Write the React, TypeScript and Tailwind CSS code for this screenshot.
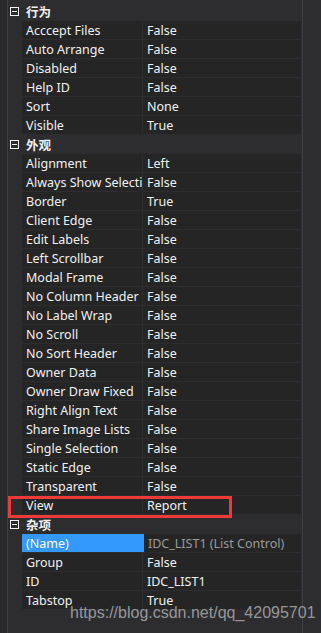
import React from "react";

type Prop = { name: string; value: string; selected?: boolean };
type Group = { title: string; items: Prop[] };

const groups: Group[] = [
  {
    title: "行为",
    items: [
      { name: "Acccept Files", value: "False" },
      { name: "Auto Arrange", value: "False" },
      { name: "Disabled", value: "False" },
      { name: "Help ID", value: "False" },
      { name: "Sort", value: "None" },
      { name: "Visible", value: "True" },
    ],
  },
  {
    title: "外观",
    items: [
      { name: "Alignment", value: "Left" },
      { name: "Always Show Selection", value: "False" },
      { name: "Border", value: "True" },
      { name: "Client Edge", value: "False" },
      { name: "Edit Labels", value: "False" },
      { name: "Left Scrollbar", value: "False" },
      { name: "Modal Frame", value: "False" },
      { name: "No Column Header", value: "False" },
      { name: "No Label Wrap", value: "False" },
      { name: "No Scroll", value: "False" },
      { name: "No Sort Header", value: "False" },
      { name: "Owner Data", value: "False" },
      { name: "Owner Draw Fixed", value: "False" },
      { name: "Right Align Text", value: "False" },
      { name: "Share Image Lists", value: "False" },
      { name: "Single Selection", value: "False" },
      { name: "Static Edge", value: "False" },
      { name: "Transparent", value: "False" },
      { name: "View", value: "Report" },
    ],
  },
  {
    title: "杂项",
    items: [
      { name: "(Name)", value: "IDC_LIST1 (List Control)", selected: true },
      { name: "Group", value: "False" },
      { name: "ID", value: "IDC_LIST1" },
      { name: "Tabstop", value: "True" },
    ],
  },
];

function Collapse() {
  return (
    <div className="relative w-[9px] h-[9px] border border-[#f1f1f1] ml-[2px] mr-[7px]">
      <div className="absolute left-[1px] right-[1px] top-[3px] h-px bg-[#f1f1f1]" />
    </div>
  );
}

function Row({ p }: { p: Prop }) {
  return (
    <div className="flex h-[19px] pb-px gap-px pl-[14px]">
      <div
        className={
          p.selected
            ? "w-[120px] bg-[#3399ff] pl-[4px] pt-px text-white whitespace-nowrap overflow-hidden"
            : "w-[120px] bg-[#252526] pl-[4px] pt-px text-[#f1f1f1] whitespace-nowrap overflow-hidden"
        }
      >
        {p.name}
      </div>
      <div
        className={
          p.selected
            ? "flex-1 bg-[#252526] pl-[4px] pt-px text-[#9a9a9a] whitespace-nowrap overflow-hidden border-l-2 border-[#3399ff] -ml-px"
            : "flex-1 bg-[#252526] pl-[4px] pt-px text-[#f1f1f1] whitespace-nowrap overflow-hidden"
        }
      >
        {p.value}
      </div>
    </div>
  );
}

export default function App() {
  return (
    <div className="relative w-[321px] h-[633px] overflow-hidden bg-[#2d2d30] flex text-[12.5px] leading-[17px] font-['Noto_Sans','Noto_Sans_CJK_SC',sans-serif]">
      <div className="w-[8px] bg-[#2a2a2c] border-r border-[#3f3f46]" />
      <div className="w-[293px] pt-[2px]">
        {groups.map((g) => (
          <div key={g.title}>
            <div className="flex items-center h-[19px] text-[#f1f1f1] font-bold">
              <Collapse />
              <span className="pt-px">{g.title}</span>
            </div>
            {g.items.map((p) => (
              <Row key={p.name} p={p} />
            ))}
          </div>
        ))}
      </div>
      <div className="w-px" />
      <div className="w-px bg-[#3f3f46]" />
      <div className="flex-1" />

      {/* annotation box */}
      <div className="absolute left-[8px] top-[496px] w-[224px] h-[22px] border-[3px] border-[#f03a3a]" />

      {/* watermark */}
      <div className="absolute left-[70px] top-[603px] text-[16px] leading-[20px] text-[#b4b4b4]/80 font-['Liberation_Sans',Arial,sans-serif] whitespace-nowrap">
        https://blog.csdn.net/qq_42095701
      </div>
    </div>
  );
}
